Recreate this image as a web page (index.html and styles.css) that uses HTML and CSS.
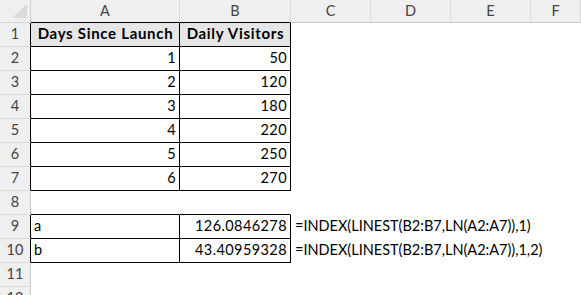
FILE: index.html
```html
<!DOCTYPE html>
<html>
<head>
<meta charset="utf-8">
<link rel="stylesheet" href="styles.css">
</head>
<body>
<div class="sheet">
  <div class="corner"><span class="tri"></span></div>
  <div class="ch edge">A</div>
  <div class="ch edge">B</div>
  <div class="ch">C</div>
  <div class="ch">D</div>
  <div class="ch">E</div>
  <div class="ch">F</div>

  <div class="rh dark">1</div>
  <div class="c box head">Days Since Launch</div>
  <div class="c box head">Daily Visitors</div>
  <div class="c"></div><div class="c"></div><div class="c"></div><div class="c"></div>

  <div class="rh dark">2</div>
  <div class="c box num">1</div>
  <div class="c box num">50</div>
  <div class="c"></div><div class="c"></div><div class="c"></div><div class="c"></div>

  <div class="rh dark">3</div>
  <div class="c box num">2</div>
  <div class="c box num">120</div>
  <div class="c"></div><div class="c"></div><div class="c"></div><div class="c"></div>

  <div class="rh dark">4</div>
  <div class="c box num">3</div>
  <div class="c box num">180</div>
  <div class="c"></div><div class="c"></div><div class="c"></div><div class="c"></div>

  <div class="rh dark">5</div>
  <div class="c box num">4</div>
  <div class="c box num">220</div>
  <div class="c"></div><div class="c"></div><div class="c"></div><div class="c"></div>

  <div class="rh dark">6</div>
  <div class="c box num">5</div>
  <div class="c box num">250</div>
  <div class="c"></div><div class="c"></div><div class="c"></div><div class="c"></div>

  <div class="rh dark">7</div>
  <div class="c box num">6</div>
  <div class="c box num">270</div>
  <div class="c"></div><div class="c"></div><div class="c"></div><div class="c"></div>

  <div class="rh">8</div>
  <div class="c under"></div>
  <div class="c under"></div>
  <div class="c"></div><div class="c"></div><div class="c"></div><div class="c"></div>

  <div class="rh dark">9</div>
  <div class="c box">a</div>
  <div class="c box num">126.0846278</div>
  <div class="c over">=INDEX(LINEST(B2:B7,LN(A2:A7)),1)</div>
  <div class="c"></div><div class="c"></div><div class="c"></div>

  <div class="rh dark">10</div>
  <div class="c box">b</div>
  <div class="c box num">43.40959328</div>
  <div class="c over">=INDEX(LINEST(B2:B7,LN(A2:A7)),1,2)</div>
  <div class="c"></div><div class="c"></div><div class="c"></div>

  <div class="rh">11</div>
  <div class="c"></div><div class="c"></div><div class="c"></div><div class="c"></div><div class="c"></div><div class="c"></div>

  <div class="rh">12</div>
  <div class="c"></div><div class="c"></div><div class="c"></div><div class="c"></div><div class="c"></div><div class="c"></div>
</div>
</body>
</html>
```
FILE: styles.css
```css
html, body {
  margin: 0;
  padding: 0;
  background: #ffffff;
}
body {
  width: 581px;
  height: 295px;
  overflow: hidden;
  font-family: Lato, sans-serif;
  font-size: 14.5px;
  color: #000;
}
.sheet {
  display: grid;
  grid-template-columns: 31px 149px 111px 80px 80px 80px 50px;
  grid-template-rows: 23px repeat(12, 24px);
}
.sheet > div {
  box-sizing: border-box;
  border-right: 1px solid transparent;
  border-bottom: 1px solid transparent;
  white-space: nowrap;
  line-height: 1;
}
.corner {
  background: #efefef;
  border-right-color: #d4d4d4 !important;
  border-bottom-color: #d4d4d4 !important;
  position: relative;
}
.tri {
  position: absolute;
  right: 3px;
  bottom: 4px;
  width: 0;
  height: 0;
  border-left: 15px solid transparent;
  border-bottom: 14px solid #dadada;
}
.ch {
  background: #efefef;
  border-right-color: #dadada !important;
  border-bottom-color: #c8c8c8 !important;
  color: #444;
  display: flex;
  align-items: flex-end;
  justify-content: center;
  padding-bottom: 4px;
}
.ch.edge {
  border-bottom-color: #000 !important;
}
.rh {
  background: #efefef;
  border-right-color: #c8c8c8 !important;
  border-bottom-color: #dadada !important;
  color: #444;
  display: flex;
  align-items: flex-end;
  justify-content: center;
  padding-bottom: 5px;
}
.rh.dark {
  border-right-color: #000 !important;
}
.c {
  display: flex;
  align-items: flex-end;
  padding: 0 3px 5px 3px;
}
.box {
  border-right-color: #000 !important;
  border-bottom-color: #000 !important;
}
.under {
  border-bottom-color: #000 !important;
}
.head {
  background: #e7e6e6;
  font-weight: 700;
  font-size: 15px;
  letter-spacing: 0.7px;
  justify-content: center;
  padding-left: 1px;
  padding-right: 0;
}
.num {
  justify-content: flex-end;
  font-size: 14.5px;
  letter-spacing: 0.4px;
}
.over {
  overflow: visible;
  padding-left: 4px;
}
```
